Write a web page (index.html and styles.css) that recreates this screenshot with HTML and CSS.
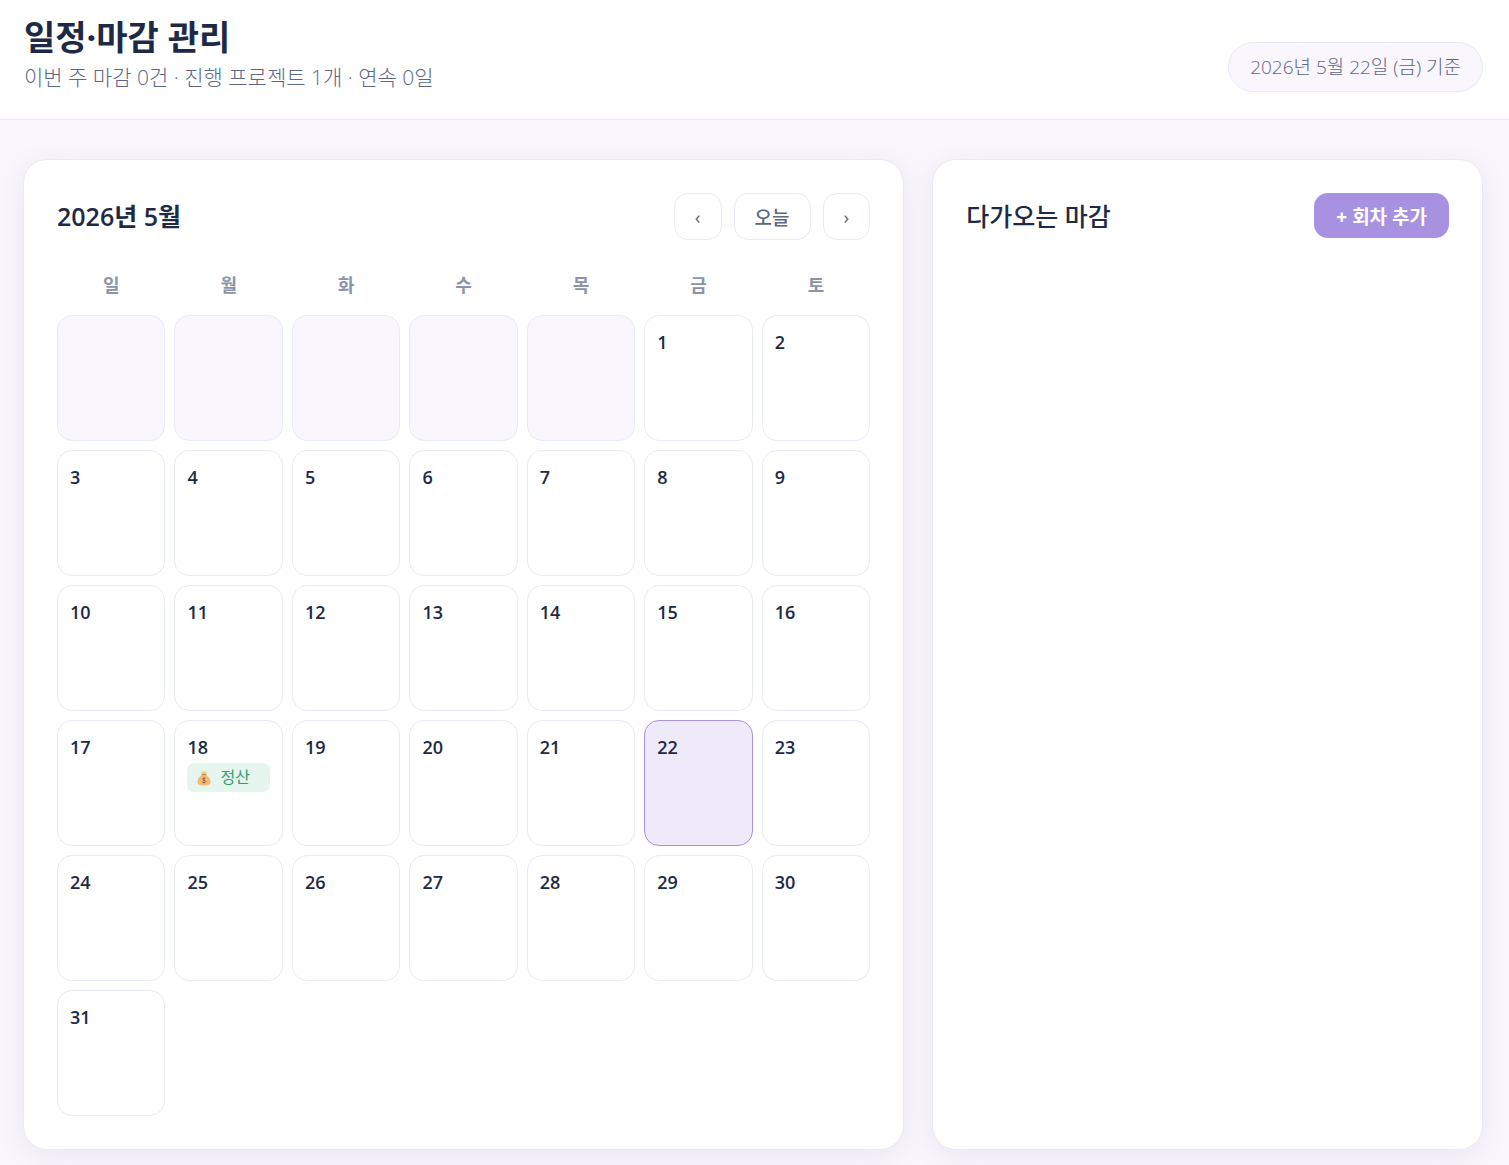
FILE: index.html
```
<!DOCTYPE html>
<html lang="ko">
<head>
    <meta charset="UTF-8">
    <meta name="viewport" content="width=device-width, initial-scale=1.0">
    <title>일정·마감 관리</title>
    <link rel="stylesheet" href="styles.css">
</head>
<body>
    <header class="page-header">
        <div>
            <h1>일정·마감 관리</h1>
            <p class="subtitle">이번 주 마감 0건 · 진행 프로젝트 1개 · 연속 0일</p>
        </div>
        <span class="date-pill">2026년 5월 22일 (금) 기준</span>
    </header>

    <main class="layout">
        <section class="card">
            <div class="card-header">
                <h2 class="month">2026년 5월</h2>
                <div class="nav">
                    <button type="button" class="nav-btn" aria-label="이전 달">‹</button>
                    <button type="button" class="nav-btn">오늘</button>
                    <button type="button" class="nav-btn" aria-label="다음 달">›</button>
                </div>
            </div>

            <div class="weekdays">
                <span>일</span>
                <span>월</span>
                <span>화</span>
                <span>수</span>
                <span>목</span>
                <span>금</span>
                <span>토</span>
            </div>

            <div class="days">
                <div class="day empty"></div>
                <div class="day empty"></div>
                <div class="day empty"></div>
                <div class="day empty"></div>
                <div class="day empty"></div>
                <div class="day">1</div>
                <div class="day">2</div>
                <div class="day">3</div>
                <div class="day">4</div>
                <div class="day">5</div>
                <div class="day">6</div>
                <div class="day">7</div>
                <div class="day">8</div>
                <div class="day">9</div>
                <div class="day">10</div>
                <div class="day">11</div>
                <div class="day">12</div>
                <div class="day">13</div>
                <div class="day">14</div>
                <div class="day">15</div>
                <div class="day">16</div>
                <div class="day">17</div>
                <div class="day">18
                    <div class="event">
                        <svg class="event-icon" viewBox="0 0 14 16" aria-hidden="true">
                            <path d="M4 1.5 L5.8 2.2 L7 0.8 L8.2 2.2 L10 1.5 L9 4.5 H5 Z" fill="#f3c77c"/>
                            <path d="M5 4.8 C2.5 6.5 .6 9 .6 11.8 C.6 14.6 2.2 15.5 7 15.5 C11.8 15.5 13.4 14.6 13.4 11.8 C13.4 9 11.5 6.5 9 4.8 Z" fill="#f5b971"/>
                            <path d="M5 4.6 H9" stroke="#b98a5e" stroke-width="1" stroke-linecap="round"/>
                            <path d="M8.6 8.7 C8.1 8 5.5 7.9 5.5 9.3 C5.5 10.7 8.7 10 8.7 11.5 C8.7 12.9 5.8 12.8 5.2 12 M7 7.2 V13.6" fill="none" stroke="#8a6040" stroke-width="0.8"/>
                        </svg>
                        <span>정산</span>
                    </div>
                </div>
                <div class="day">19</div>
                <div class="day">20</div>
                <div class="day">21</div>
                <div class="day today">22</div>
                <div class="day">23</div>
                <div class="day">24</div>
                <div class="day">25</div>
                <div class="day">26</div>
                <div class="day">27</div>
                <div class="day">28</div>
                <div class="day">29</div>
                <div class="day">30</div>
                <div class="day">31</div>
            </div>
        </section>

        <section class="card">
            <div class="card-header">
                <h2 class="upcoming">다가오는 마감</h2>
                <button type="button" class="add-btn">+ 회차 추가</button>
            </div>
        </section>
    </main>
</body>
</html>
```
FILE: styles.css
```
* {
    box-sizing: border-box;
}

body {
    margin: 0;
    font-family: "Open Sans", "Noto Sans CJK KR", sans-serif;
    color: #1e2a45;
    background: #f9f6fd;
}

h1, h2, p {
    margin: 0;
}

button {
    font-family: inherit;
    cursor: pointer;
}

.page-header {
    display: flex;
    justify-content: space-between;
    align-items: flex-end;
    padding: 15px 26px 27px 24px;
    background: white;
    border-bottom: 1px solid #e8eaf5;
}

h1 {
    margin-bottom: 3px;
    font-size: 34px;
    line-height: 44px;
    font-weight: 700;
}

.subtitle {
    font-size: 21px;
    line-height: 30px;
    font-weight: 300;
    color: #5b6785;
}

.date-pill {
    padding: 0 21px;
    border: 1px solid #e8eaf5;
    border-radius: 25px;
    background: #f9f6fd;
    font-size: 19px;
    line-height: 48px;
    font-weight: 300;
    color: #5b6785;
}

.layout {
    display: grid;
    grid-template-columns: 1.6fr 1fr;
    gap: 28px;
    padding: 39px 26px 15px 23px;
}

.card {
    padding: 33px;
    background: white;
    border: 1px solid #e8eaf5;
    border-radius: 24px;
    box-shadow: 0 6px 30px rgba(60, 30, 80, 0.07);
}

.card-header {
    display: flex;
    justify-content: space-between;
    align-items: flex-start;
}

h2 {
    font-size: 25px;
    line-height: 47px;
}

.month {
    font-weight: 600;
}

.upcoming {
    font-weight: 500;
}

.nav {
    display: flex;
    gap: 12px;
}

.nav-btn {
    height: 47px;
    padding: 0 20px;
    background: white;
    border: 1px solid #e8eaf5;
    border-radius: 14px;
    font-size: 19px;
    font-weight: 500;
    color: #5b6785;
}

.add-btn {
    height: 45px;
    padding: 0 22px;
    background: #a891e0;
    border: none;
    border-radius: 14px;
    font-size: 19px;
    font-weight: 700;
    color: white;
}

.weekdays, .days {
    display: grid;
    grid-template-columns: repeat(7, 1fr);
    gap: 9px;
}

.weekdays {
    padding: 30px 0 15px;
    text-align: center;
    font-size: 18px;
    line-height: 30px;
    font-weight: 600;
    color: #8b93ab;
}

.day {
    height: 126px;
    padding: 12px;
    border: 1px solid #e8eaf5;
    border-radius: 15px;
    font-size: 18px;
    line-height: 28px;
    font-weight: 600;
}

.empty {
    background: #f9f6fd;
}

.today {
    background: #efeafa;
    border-color: #a891e0;
}

.event {
    display: flex;
    align-items: center;
    gap: 9px;
    margin-top: 2px;
    padding: 0 10px;
    border-radius: 7px;
    background: #e6f6ee;
    font-size: 16px;
    line-height: 29px;
    font-weight: 400;
    color: #2f9e6e;
}

.event-icon {
    width: 14px;
    height: 16px;
}
```
